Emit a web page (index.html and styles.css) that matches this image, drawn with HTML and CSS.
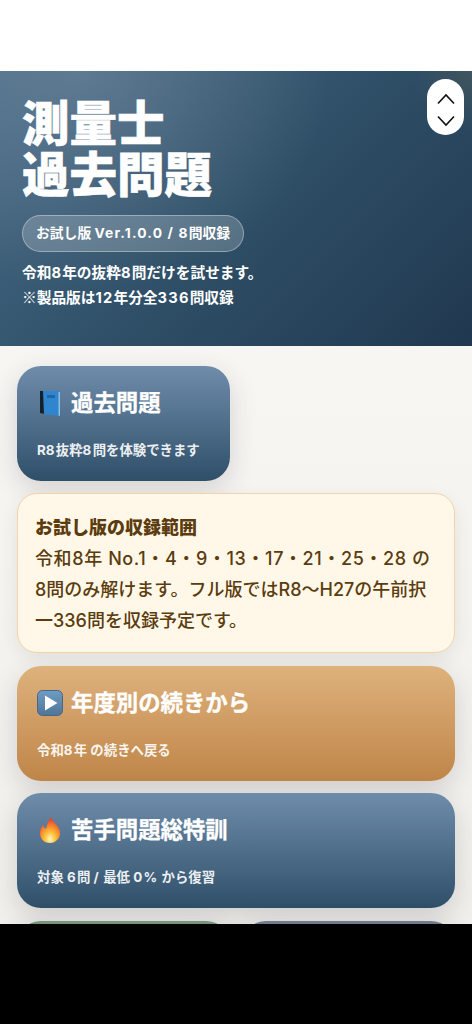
FILE: index.html
```html
<!DOCTYPE html>
<html lang="ja">
<head>
<meta charset="utf-8">
<title>測量士 過去問題</title>
<link rel="stylesheet" href="styles.css">
</head>
<body>
<div class="screen">
  <div class="topbar"></div>
  <header class="hero">
    <h1 class="hero-title">測量士<br>過去問題</h1>
    <div class="pill">お試し版 <span class="wl">Ver.1.0.0 / 8</span>問収録</div>
    <p class="hero-text">令和<span class="wn">8</span>年の抜粋<span class="wn">8</span>問だけを試せます。<br><span class="cjk">※</span>製品版は<span class="wn">12</span>年分全<span class="wn">336</span>問収録</p>
    <div class="stepper">
      <svg width="18" height="12" viewBox="0 0 18 12"><path d="M1 10.500 9 2l8 8.500" fill="none" stroke="#111" stroke-width="1.600"/></svg>
      <svg width="18" height="12" viewBox="0 0 18 12"><path d="M1 1.500 9 10l8-8.500" fill="none" stroke="#111" stroke-width="1.600"/></svg>
    </div>
  </header>
  <main class="content">
    <div class="grid">
      <a class="card blue">
        <div class="card-title">
          <svg class="icon" viewBox="0 0 26 26"><path d="M3 1h4l1 23-5-1z" fill="#14202c"/><path d="M6 1h17v25L7 24z" fill="#2f86cf"/><path d="M21.500 2H23v24l-1.500-.5z" fill="#8cbde2"/><rect x="10" y="5" width="8" height="3" fill="#1f66a8"/></svg>
          <span>過去問題</span>
        </div>
        <div class="card-sub">R<span class="ws">8</span>抜粋<span class="ws">8</span>問を体験できます</div>
      </a>
      <div class="spacer"></div>
      <section class="notice">
        <strong>お試し版の収録範囲</strong><br>
        <span class="nums">令和8年 No.1・4・9・13・17・21・25・28 の</span><br>8問のみ解けます。フル版ではR8〜H27の午前択一336問を収録予定です。
      </section>
      <a class="card orange wide">
        <div class="card-title">
          <svg class="icon" viewBox="0 0 26 26"><defs><linearGradient id="p" x1="0" y1="0" x2="0" y2="1"><stop offset="0" stop-color="#6f9cc4"/><stop offset="1" stop-color="#4f7597"/></linearGradient></defs><rect x=".5" y=".5" width="25" height="25" rx="5" fill="url(#p)" stroke="#47678a"/><path d="M8 5.500v15L20.500 13z" fill="#fff"/></svg>
          <span>年度別の続きから</span>
        </div>
        <div class="card-sub">令和<span class="ws">8</span>年 の続きへ戻る</div>
      </a>
      <a class="card blue wide">
        <div class="card-title">
          <svg class="icon" viewBox="0 0 26 26"><defs><radialGradient id="f" cx=".5" cy=".85" r=".75"><stop offset="0" stop-color="#fff6c0"/><stop offset=".35" stop-color="#ffc23c"/><stop offset=".7" stop-color="#f9802a"/><stop offset="1" stop-color="#e8452a"/></radialGradient></defs><path d="M14 0c1 5 8 8 9 15 .6 6-4 11-10 11S3 22 3 16c0-4 2-6 3-8 1 2 1.500 3 3 4 1-4 2-8 5-12z" fill="url(#f)"/></svg>
          <span>苦手問題総特訓</span>
        </div>
        <div class="card-sub">対象 <span class="ws">6</span>問 <span class="ws">/</span> 最低 <span class="ws">0%</span> から復習</div>
      </a>
      <a class="card green"></a>
      <a class="card slate"></a>
    </div>
  </main>
</div>
<div class="blackbar"></div>
</body>
</html>
```
FILE: styles.css
```css
* { box-sizing: border-box; }
html, body { margin: 0; padding: 0; height: 1024px; overflow: hidden; background: #000; }
body { font-family: "Inter", "Noto Sans CJK JP", sans-serif; }
.screen { height: 924px; overflow: hidden; display: flex; flex-direction: column; background: #fff; }
.topbar { height: 71px; flex: none; background: #fff; }
.hero {
  position: relative;
  flex: none;
  height: 275px;
  padding: 25px 22px 0;
  color: #fff;
  background:
    radial-gradient(circle at 100% 0, rgba(90,100,90,.45), rgba(90,100,90,0) 60px),
    radial-gradient(ellipse 250px 220px at 80px 0, rgba(130,150,170,.42), rgba(130,150,170,0) 100%),
    linear-gradient(135deg, #4b6c88 0%, #2f5068 50%, #20384f 100%);
}
.hero-title { margin: 0; font-family: "Noto Sans CJK JP", sans-serif; font-size: 47.500px; line-height: 50.500px; font-weight: 900; -webkit-text-stroke: .6px #fff; }
.pill {
  display: inline-block;
  margin-top: 18px;
  height: 37px;
  width: 222px;
  padding: 0 13px;
  line-height: 35px;
  font-size: 13.800px;
  font-weight: 700;
  white-space: nowrap;
  border: 1px solid rgba(255,255,255,.35);
  border-radius: 19px;
  background: rgba(255,255,255,.2);
}
.wl { letter-spacing: 1.150px; }
.wn { letter-spacing: 1.200px; }
.ws { letter-spacing: 1.300px; }
.cjk { font-family: "Noto Sans CJK JP", sans-serif; font-weight: 400; }
.hero-text { margin: 9px 0 0; font-size: 14.700px; line-height: 24px; font-weight: 700; }
.stepper {
  position: absolute;
  top: 8px;
  right: 8px;
  width: 37px;
  height: 56px;
  border-radius: 18.500px;
  background: #fff;
  display: flex;
  flex-direction: column;
  align-items: center;
  justify-content: space-between;
  padding: 14px 0 8px;
}
.content { flex: 1; min-height: 0; padding: 19.500px 17px 0; background: linear-gradient(180deg, #f8f6f3 0%, #f1efeb 100%); }
.grid { display: grid; grid-template-columns: 213px 213px; gap: 12.500px 12px; }
.card {
  display: block;
  height: 115px;
  padding: 19px 20px 0;
  border-radius: 24px;
  color: #fff;
  box-shadow: 0 8px 26px rgba(30,40,50,.17);
}
.wide { grid-column: 1 / -1; }
.blue { background: linear-gradient(180deg, #6f8dab 0%, #2f4f69 100%); }
.orange { background: linear-gradient(180deg, #deb27c 0%, #bf8549 100%); }
.green { background: linear-gradient(180deg, #76957c 0%, #587a5c 100%); }
.slate { background: linear-gradient(180deg, #717d8c 0%, #566070 100%); }
.card-title { display: flex; align-items: center; gap: 8px; height: 36px; font-size: 22.400px; font-weight: 700; line-height: 36px; white-space: nowrap; -webkit-text-stroke: .3px #fff; }
.icon { width: 26px; height: 26px; flex: none; }
.card-sub { margin-top: 18px; font-size: 13.400px; line-height: 22px; font-weight: 700; opacity: .9; white-space: nowrap; }
.notice {
  grid-column: 1 / -1;
  height: 160px;
  padding: 18px 17px 0;
  border: 1px solid #f5d3a6;
  border-radius: 20px;
  background: #fff8e9;
  color: #5b3c0e;
  font-size: 18px;
  line-height: 31px;
  font-weight: 500;
  box-shadow: 0 6px 18px rgba(60,50,40,.09);
}
.notice strong { font-weight: 900; }
.nums { letter-spacing: .6px; white-space: nowrap; }
.blackbar { height: 100px; background: #000; }
```
